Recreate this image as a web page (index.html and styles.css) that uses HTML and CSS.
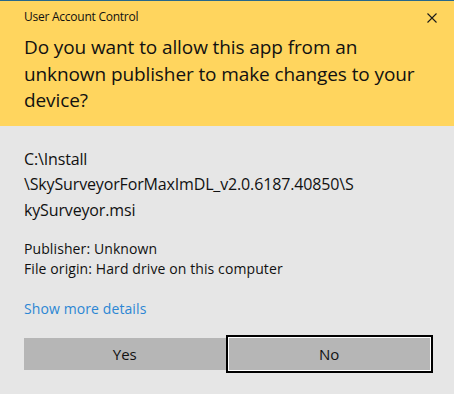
FILE: index.html
```html
<!DOCTYPE html>
<html lang="en">
<head>
<meta charset="utf-8">
<title>User Account Control</title>
<link rel="stylesheet" href="styles.css">
</head>
<body>
<div class="dialog">
  <header class="banner">
    <div class="titlebar">
      <span class="title">User Account Control</span>
      <span class="close" aria-label="Close">
        <svg width="10" height="10" viewBox="0 0 10 10"><path d="M0.5 0.5 L9.5 9.5 M9.5 0.5 L0.5 9.5" stroke="#1a1a1a" stroke-width="1.1" fill="none"/></svg>
      </span>
    </div>
    <h1 class="question">Do you want to allow this app from an<br>unknown publisher to make changes to your<br>device?</h1>
  </header>
  <main class="content">
    <p class="path">C:\Install<br>\SkySurveyorForMaxImDL_v2.0.6187.40850\S<br>kySurveyor.msi</p>
    <p class="meta">Publisher: Unknown<br>File origin: Hard drive on this computer</p>
    <a class="more" href="#">Show more details</a>
    <div class="buttons">
      <button class="btn">Yes</button>
      <button class="btn btn-default">No</button>
    </div>
  </main>
</div>
</body>
</html>
```
FILE: styles.css
```css
html, body {
  margin: 0;
  padding: 0;
}
body {
  width: 454px;
  height: 394px;
  background: #e6e6e6;
  font-family: "Open Sans", "Noto Sans", sans-serif;
  color: #000;
  overflow: hidden;
}
.dialog {
  display: flex;
  flex-direction: column;
}
.banner {
  background: #ffd55e;
  border-top: 1px solid #27688c;
  padding: 8px 17px 12px 24px;
}
.titlebar {
  display: flex;
  justify-content: space-between;
  align-items: center;
  height: 16px;
}
.title {
  font-size: 12px;
  line-height: 16px;
  letter-spacing: -0.25px;
  color: #111;
}
.close {
  display: flex;
  width: 10px;
  height: 10px;
  margin-top: 2px;
}
.question {
  margin: 9px 0 0 0;
  font-size: 19px;
  line-height: 26.5px;
  letter-spacing: -0.1px;
  font-weight: 400;
  color: #111;
  white-space: nowrap;
}
.content {
  padding: 0 24px;
  display: flex;
  flex-direction: column;
}
.path {
  margin: 21px 0 0 0;
  font-size: 16px;
  line-height: 25.5px;
  letter-spacing: -0.15px;
  color: #111;
  white-space: nowrap;
}
.meta {
  margin: 16px 0 0 0;
  font-size: 14px;
  line-height: 20px;
  letter-spacing: 0.1px;
  color: #111;
}
.more {
  margin-top: 20px;
  font-size: 14px;
  line-height: 20px;
  letter-spacing: 0.1px;
  color: #2c86d4;
  text-decoration: none;
  align-self: flex-start;
}
.buttons {
  margin-top: 19px;
  display: flex;
  gap: 3px;
}
.btn {
  flex: 1;
  height: 32px;
  border: none;
  background: #b6b6b6;
  font-family: inherit;
  font-size: 15px;
  color: #111;
  padding: 0;
}
.btn-default {
  box-shadow: 0 0 0 1px #fff, 0 0 0 3px #000;
}
```
